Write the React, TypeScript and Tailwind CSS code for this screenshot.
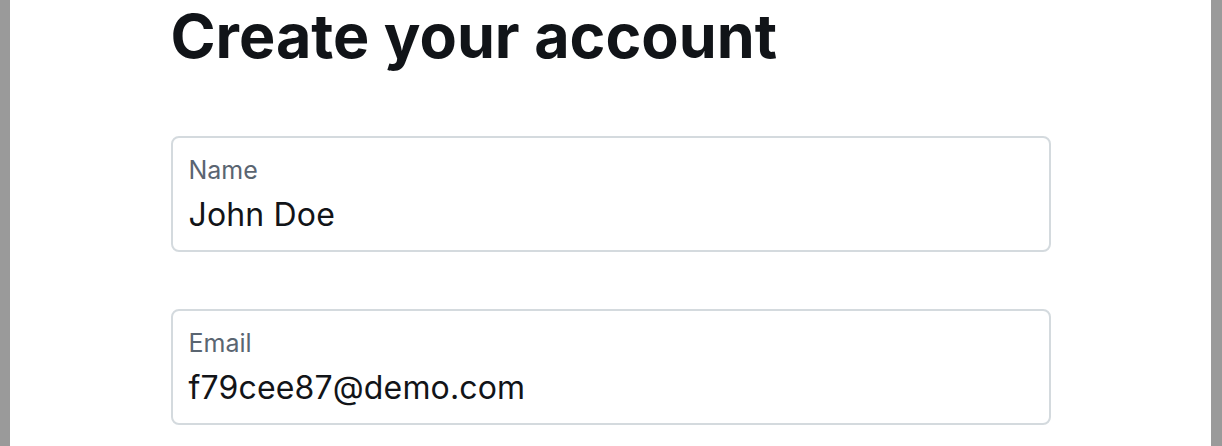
import React from "react";

function Field({ label, value }: { label: string; value: string }) {
  return (
    <div className="flex h-[116px] flex-col rounded-[8px] border-2 border-[#d4dade] bg-white px-4 pt-[16px]">
      <div className="text-[25px] leading-[32px] text-[#5a6571]">{label}</div>
      <div className="mt-[9px] text-[32px] leading-[40px] tracking-[0.005em] text-[#121418]">{value}</div>
    </div>
  );
}

export default function App() {
  return (
    <div
      className="flex h-[446px] w-full overflow-hidden bg-[#9a9a9a]"
      style={{ fontFamily: "Inter, 'Noto Sans', sans-serif" }}
    >
      <div className="w-[10px] shrink-0 bg-[#9a9a9a]" />
      <div className="flex flex-1 justify-center bg-white">
        <div className="w-[880px]">
          <h1 className="text-[61px] font-bold leading-[72px] text-[#111418]">
            Create your account
          </h1>
          <div className="mt-[64px] flex flex-col gap-[57px]">
            <Field label="Name" value="John Doe" />
            <Field label="Email" value="f79cee87@demo.com" />
          </div>
        </div>
      </div>
      <div className="w-[11px] shrink-0 bg-[#9a9a9a]" />
    </div>
  );
}
